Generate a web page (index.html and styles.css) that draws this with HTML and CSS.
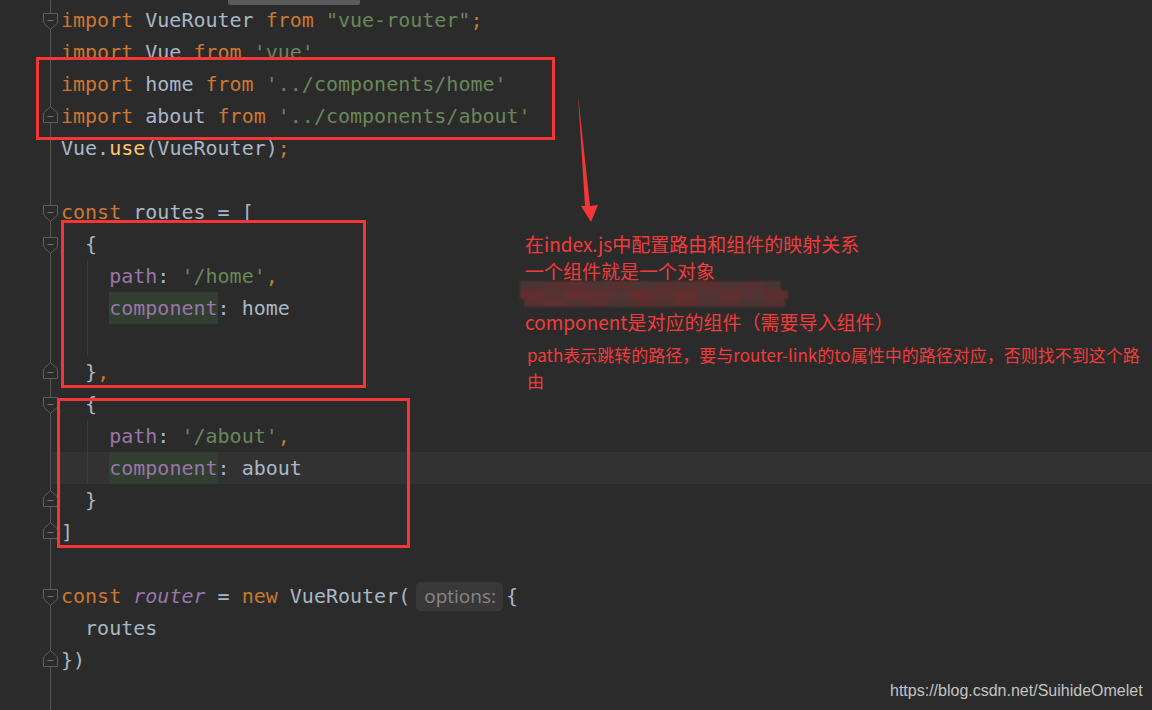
FILE: index.html
```html
<!DOCTYPE html>
<html lang="zh-CN">
<head>
<meta charset="UTF-8">
<meta name="viewport" content="width=device-width, initial-scale=1.0">
<title>router/index.js</title>
<link rel="stylesheet" href="styles.css">
</head>
<body>
<div class="editor">
    <div class="scroll-thumb"></div>

    <div class="row"><span class="fold"><svg class="open" viewBox="0 0 15 17"><path d="M0.5 0.5H14.5V10L7.5 16.5L0.5 10Z"/><path class="minus" d="M4.5 7.5H10.5"/></svg></span><span class="txt"><span class="kw">import</span> VueRouter <span class="kw">from</span> <span class="str">"vue-router"</span><span class="kw">;</span></span></div>
    <div class="row"><span class="fold"></span><span class="txt cut"><span class="kw">import</span> Vue <span class="kw">from</span> <span class="str">'vue'</span></span></div>
    <div class="row"><span class="fold"></span><span class="txt"><span class="kw">import</span> home <span class="kw">from</span> <span class="str">'../components/home'</span></span></div>
    <div class="row"><span class="fold"><svg class="close" viewBox="0 0 15 17"><path d="M7.5 0.5L14.5 7V16.5H0.5V7Z"/><path class="minus" d="M4.5 10.5H10.5"/></svg></span><span class="txt"><span class="kw">import</span> about <span class="kw">from</span> <span class="str">'../components/about'</span></span></div>
    <div class="row"><span class="fold"></span><span class="txt">Vue.<span class="fn">use</span>(VueRouter)<span class="kw">;</span></span></div>
    <div class="row"><span class="fold"></span><span class="txt"></span></div>
    <div class="row"><span class="fold"><svg class="open" viewBox="0 0 15 17"><path d="M0.5 0.5H14.5V10L7.5 16.5L0.5 10Z"/><path class="minus" d="M4.5 7.5H10.5"/></svg></span><span class="txt"><span class="kw">const</span> routes = [</span></div>
    <div class="row"><span class="fold"><svg class="open" viewBox="0 0 15 17"><path d="M0.5 0.5H14.5V10L7.5 16.5L0.5 10Z"/><path class="minus" d="M4.5 7.5H10.5"/></svg></span><span class="txt">  {</span></div>
    <div class="row guide"><span class="fold"></span><span class="txt">    <span class="prop">path</span>: <span class="str">'/home'</span><span class="kw">,</span></span></div>
    <div class="row guide"><span class="fold"></span><span class="txt">    <span class="prop hl">component</span>: home</span></div>
    <div class="row guide"><span class="fold"></span><span class="txt"></span></div>
    <div class="row"><span class="fold"><svg class="close" viewBox="0 0 15 17"><path d="M7.5 0.5L14.5 7V16.5H0.5V7Z"/><path class="minus" d="M4.5 10.5H10.5"/></svg></span><span class="txt">  }<span class="kw">,</span></span></div>
    <div class="row"><span class="fold"><svg class="open" viewBox="0 0 15 17"><path d="M0.5 0.5H14.5V10L7.5 16.5L0.5 10Z"/><path class="minus" d="M4.5 7.5H10.5"/></svg></span><span class="txt">  {</span></div>
    <div class="row guide"><span class="fold"></span><span class="txt">    <span class="prop">path</span>: <span class="str">'/about'</span><span class="kw">,</span></span></div>
    <div class="row guide current"><span class="fold"></span><span class="txt">    <span class="prop hl">component</span>: about</span></div>
    <div class="row"><span class="fold"><svg class="close" viewBox="0 0 15 17"><path d="M7.5 0.5L14.5 7V16.5H0.5V7Z"/><path class="minus" d="M4.5 10.5H10.5"/></svg></span><span class="txt">  }</span></div>
    <div class="row"><span class="fold"><svg class="close" viewBox="0 0 15 17"><path d="M7.5 0.5L14.5 7V16.5H0.5V7Z"/><path class="minus" d="M4.5 10.5H10.5"/></svg></span><span class="txt">]</span></div>
    <div class="row"><span class="fold"></span><span class="txt"></span></div>
    <div class="row"><span class="fold"><svg class="open" viewBox="0 0 15 17"><path d="M0.5 0.5H14.5V10L7.5 16.5L0.5 10Z"/><path class="minus" d="M4.5 7.5H10.5"/></svg></span><span class="txt"><span class="kw">const</span> <span class="var">router</span> = <span class="kw">new</span> VueRouter(<span class="hint">options:</span>{</span></div>
    <div class="row"><span class="fold"></span><span class="txt">  routes</span></div>
    <div class="row"><span class="fold"><svg class="close" viewBox="0 0 15 17"><path d="M7.5 0.5L14.5 7V16.5H0.5V7Z"/><path class="minus" d="M4.5 10.5H10.5"/></svg></span><span class="txt">})</span></div>

    <!-- annotations drawn on top of the screenshot -->
    <div class="mark mark-imports"></div>
    <div class="mark mark-home"></div>
    <div class="mark mark-about"></div>

    <svg class="arrow" viewBox="0 0 36 140"><polygon points="8,5 20,116 28,115 21,132 11,116 15,116"/></svg>

    <div class="note">
        <div class="note-line">在index.js中配置路由和组件的映射关系</div>
        <div class="note-line">一个组件就是一个对象</div>
        <svg class="mosaic" viewBox="0 0 268 27">
            <g>
                <rect x="0" y="0" width="23" height="9" fill="#4c3434"/>
                <rect x="23" y="0" width="22" height="9" fill="#553131"/>
                <rect x="45" y="0" width="22" height="9" fill="#5a2f2f"/>
                <rect x="67" y="0" width="22" height="9" fill="#503434"/>
                <rect x="89" y="0" width="22" height="9" fill="#592f2f"/>
                <rect x="111" y="0" width="22" height="9" fill="#4d3535"/>
                <rect x="133" y="0" width="22" height="9" fill="#573030"/>
                <rect x="155" y="0" width="22" height="9" fill="#513333"/>
                <rect x="177" y="0" width="22" height="9" fill="#5b2f2f"/>
                <rect x="199" y="0" width="22" height="9" fill="#4f3434"/>
                <rect x="221" y="0" width="22" height="9" fill="#563131"/>
                <rect x="243" y="0" width="18" height="9" fill="#4a3535"/>
                <rect x="0" y="9" width="23" height="9" fill="#632d2d"/>
                <rect x="23" y="9" width="22" height="9" fill="#563232"/>
                <rect x="45" y="9" width="22" height="9" fill="#652e2e"/>
                <rect x="67" y="9" width="22" height="9" fill="#5e3030"/>
                <rect x="89" y="9" width="22" height="9" fill="#533434"/>
                <rect x="111" y="9" width="22" height="9" fill="#632d2d"/>
                <rect x="133" y="9" width="22" height="9" fill="#593131"/>
                <rect x="155" y="9" width="22" height="9" fill="#662d2d"/>
                <rect x="177" y="9" width="22" height="9" fill="#543333"/>
                <rect x="199" y="9" width="22" height="9" fill="#612e2e"/>
                <rect x="221" y="9" width="22" height="9" fill="#523434"/>
                <rect x="243" y="9" width="25" height="9" fill="#5c2e2e"/>
                <rect x="4" y="18" width="19" height="8" fill="#573131"/>
                <rect x="23" y="18" width="22" height="8" fill="#612f2f"/>
                <rect x="45" y="18" width="22" height="8" fill="#513333"/>
                <rect x="67" y="18" width="22" height="8" fill="#5b3030"/>
                <rect x="89" y="18" width="22" height="8" fill="#4d3434"/>
                <rect x="111" y="18" width="22" height="8" fill="#593030"/>
                <rect x="133" y="18" width="22" height="8" fill="#513333"/>
                <rect x="155" y="18" width="22" height="8" fill="#5e2f2f"/>
                <rect x="177" y="18" width="22" height="8" fill="#4e3434"/>
                <rect x="199" y="18" width="22" height="8" fill="#573131"/>
                <rect x="221" y="18" width="22" height="8" fill="#4b3434"/>
                <rect x="243" y="18" width="22" height="8" fill="#553030"/>
            </g>
        </svg>
        <div class="note-line wide">component是对应的组件（需要导入组件）</div>
        <div class="note-small">path表示跳转的路径，要与router-link的to属性中的路径对应，否则找不到这个路<br>由</div>
    </div>

    <div class="credit">https://blog.csdn.net/SuihideOmelet</div>
</div>
</body>
</html>
```

FILE: styles.css
```css
* {
    box-sizing: border-box;
}
body {
    margin: 0;
    background-color: #2b2b2b;
    overflow: hidden;
}
.editor {
    position: relative;
    height: 710px;
    padding-top: 4px;
    background: linear-gradient(#555, #555) no-repeat 50px 0 / 1px 100%, #2b2b2b;
    font-family: "DejaVu Sans Mono", monospace;
}
.scroll-thumb {
    position: absolute;
    top: 0;
    left: 228px;
    width: 132px;
    height: 5px;
    background-color: #5a5a5a;
    border-radius: 0 0 2px 2px;
}
.row {
    display: flex;
    height: 32px;
}
.fold {
    flex: none;
    width: 61px;
    padding-left: 43px;
}
.fold svg {
    display: block;
    width: 15px;
    height: 17px;
    fill: #2b2b2b;
    stroke: #5d5d5d;
    stroke-width: 1;
}
.fold svg .minus {
    stroke: #727272;
}
.fold .open {
    margin-top: 9px;
}
.fold .close {
    margin-top: 6px;
}
.txt {
    white-space: pre;
    font-size: 20px;
    line-height: 32px;
    color: #a9b7c6;
}
.cut {
    clip-path: inset(0 0 11px 0); /* lower half hidden under the pasted box */
}
.guide {
    background: linear-gradient(#393939, #393939) no-repeat 87px 0 / 1px 100%;
}
.current {
    background: linear-gradient(#323232, #323232) no-repeat 52px 0 / 100% 100%;
}
.guide.current {
    background: linear-gradient(#3d3d3d, #3d3d3d) no-repeat 87px 0 / 1px 100%,
                linear-gradient(#323232, #323232) no-repeat 52px 0 / 100% 100%;
}
.kw {
    color: #cc7832;
}
.str {
    color: #6a8759;
}
.fn {
    color: #ffc66d;
}
.prop {
    color: #9876aa;
}
.var {
    color: #9876aa;
    font-style: italic;
}
.hl {
    display: inline-block;
    height: 32px;
    background-color: #323e32;
}
.hint {
    display: inline-block;
    height: 29px;
    margin: 2px 3px 0 6px;
    padding: 0 7px 0 8px;
    vertical-align: top;
    border-radius: 5px;
    background-color: #383838;
    color: #868686;
    font-family: "Open Sans", sans-serif;
    font-size: 19px;
    line-height: 28px;
}

/* red markup */
.mark {
    position: absolute;
    border: 3px solid #f53636;
}
.mark-imports {
    left: 36px;
    top: 57px;
    width: 519px;
    height: 83px;
}
.mark-home {
    left: 61px;
    top: 220px;
    width: 305px;
    height: 168px;
}
.mark-about {
    left: 57px;
    top: 398px;
    width: 353px;
    height: 150px;
}
.arrow {
    position: absolute;
    left: 570px;
    top: 90px;
    width: 36px;
    height: 140px;
    fill: #f53636;
}
.note {
    position: absolute;
    left: 525px;
    top: 230px;
    color: #f23b3b;
    font-family: "Noto Sans CJK SC", sans-serif;
    font-size: 19px;
}
.note-line {
    line-height: 27px;
    white-space: nowrap;
}
.note-line.wide {
    line-height: 28px;
}
.mosaic {
    display: block;
    width: 268px;
    height: 27px;
    margin: -3px 0 0 -5px;
    filter: blur(0.8px);
}
.note-small {
    margin-top: 6px;
    padding-left: 2px;
    font-size: 17px;
    line-height: 26px;
    white-space: nowrap;
}
.credit {
    position: absolute;
    left: 890px;
    top: 681px;
    color: #c4c4c4;
    font-family: "Liberation Sans", Arial, sans-serif;
    font-size: 16px;
    line-height: 20px;
}
```
